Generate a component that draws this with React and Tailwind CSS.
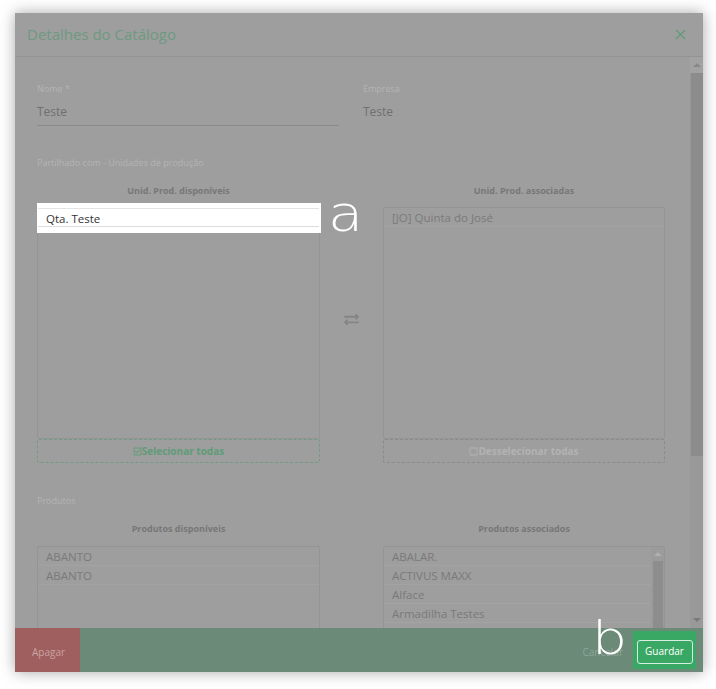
import { FaExchangeAlt, FaRegCheckSquare, FaRegSquare } from 'react-icons/fa';
import { X } from 'lucide-react';

const Row = ({ children, className = '' }) => (
  <div className={`h-[19px] px-[8px] border-b border-[#a3a3a3] text-[11.5px] leading-[19px] text-[#7a7a7a] ${className}`}>
    {children}
  </div>
);

function Field({ label, value, underline }) {
  return (
    <div>
      <div className="text-[9px] leading-[10px] text-[#b4b4b4]">{label}</div>
      <div className={`mt-[11px] pb-[6px] text-[12px] leading-[14px] text-[#6f6f6f] ${underline ? 'border-b border-[#8a8a8a]' : ''}`}>
        {value}
      </div>
    </div>
  );
}

export default function App() {
  return (
    <div className="relative w-[716px] h-[689px] bg-white overflow-hidden font-['Open_Sans','Liberation_Sans',sans-serif]">
      <div className="ml-[15px] mt-[13px] w-[688px] h-[659px] flex flex-col bg-[#9e9e9e] shadow-[0_0_14px_rgba(0,0,0,0.35)]">
        {/* Header */}
        <div className="h-[44px] flex-shrink-0 flex items-center justify-between pl-[12px] pr-[14px] border-b border-[#949494]">
          <div className="text-[15px] text-[#6d9a81]">Detalhes do Catálogo</div>
          <X size={17} strokeWidth={1.6} className="text-[#5f9b79]" />
        </div>

        {/* Body */}
        <div className="flex-1 flex min-h-0">
          <div className="flex-1 overflow-hidden pl-[22px] pr-[25px] pt-[27px]">
            <div className="grid grid-cols-2 gap-x-[24px]">
              <Field label="Nome *" value="Teste" underline />
              <Field label="Empresa" value="Teste" />
            </div>

            <div className="mt-[32px] text-[9px] leading-[10px] text-[#b4b4b4]">Partilhado com - Unidades de produção</div>

            <div className="mt-[18px] flex">
              <div className="w-[283px]">
                <div className="text-center text-[9px] leading-[10px] font-bold text-[#777]">Unid. Prod. disponíveis</div>
                <div className="relative mt-[11px] h-[232px] border border-[#949494] rounded-[2px]">
                  <div className="absolute -top-[5px] -left-[1px] -right-[2px] h-[30px] bg-white" />
                  <div className="relative h-[19px] px-[8px] border-b border-[#dcdcdc] border-t border-t-[#e4e4e4] text-[11.5px] leading-[19px] text-[#333]">Qta. Teste</div>
                </div>
                <div className="h-[24px] border border-dashed border-[#6f9c82] rounded-[2px] flex items-center justify-center text-[10px] font-bold text-[#5f9c78]">
                  <FaRegCheckSquare size={9} />
                  Selecionar todas
                </div>
              </div>

              <div className="w-[63px] flex items-center justify-center">
                <FaExchangeAlt size={15} className="text-[#858585] -mt-[10px]" />
              </div>

              <div className="w-[282px]">
                <div className="text-center text-[9px] leading-[10px] font-bold text-[#777]">Unid. Prod. associadas</div>
                <div className="mt-[11px] h-[232px] border border-[#949494] rounded-[2px]">
                  <Row>[JO] Quinta do José</Row>
                </div>
                <div className="h-[24px] border border-dashed border-[#8a8a8a] rounded-[2px] flex items-center justify-center text-[10px] font-bold text-[#b3b3b3]">
                  <FaRegSquare size={9} />
                  Desselecionar todas
                </div>
              </div>
            </div>

            <div className="mt-[33px] text-[9px] leading-[10px] text-[#b4b4b4]">Produtos</div>

            <div className="mt-[18px] flex">
              <div className="w-[283px]">
                <div className="text-center text-[9px] leading-[10px] font-bold text-[#777]">Produtos disponíveis</div>
                <div className="mt-[12px] h-[120px] border border-[#949494] rounded-[2px]">
                  <Row>ABANTO</Row>
                  <Row>ABANTO</Row>
                </div>
              </div>
              <div className="w-[63px]" />
              <div className="w-[282px]">
                <div className="text-center text-[9px] leading-[10px] font-bold text-[#777]">Produtos associados</div>
                <div className="mt-[12px] h-[120px] border border-[#949494] rounded-[2px] flex">
                  <div className="flex-1">
                    <Row>ABALAR.</Row>
                    <Row>ACTIVUS MAXX</Row>
                    <Row>Alface</Row>
                    <Row>Armadilha Testes</Row>
                  </div>
                  <div className="w-[13px] flex flex-col items-center bg-[#9b9b9b]">
                    <div className="h-[14px] flex items-center">
                      <div className="w-0 h-0 border-x-[4px] border-x-transparent border-b-[4px] border-b-[#b0b0b0]" />
                    </div>
                    <div className="w-[10px] flex-1 bg-[#8d8d8d]" />
                  </div>
                </div>
              </div>
            </div>
          </div>

          {/* Scrollbar */}
          <div className="w-[13px] flex-shrink-0 flex flex-col items-center bg-[#999999]">
            <div className="h-[16px] w-full flex items-center justify-center bg-[#a2a2a2]">
              <div className="w-0 h-0 border-x-[4px] border-x-transparent border-b-[4px] border-b-[#888]" />
            </div>
            <div className="w-[12px] h-[383px] bg-[#8c8c8c]" />
            <div className="flex-1" />
            <div className="h-[16px] flex items-center justify-center">
              <div className="w-0 h-0 border-x-[4px] border-x-transparent border-t-[4px] border-t-[#7a7a7a]" />
            </div>
          </div>
        </div>

        {/* Footer */}
        <div className="h-[44px] flex-shrink-0 flex items-stretch bg-[#6b8a77]">
          <div className="w-[65px] bg-[#a05f5f] flex items-center pt-[4px] pl-[17px] text-[10px] text-[#c9a3a3]">Apagar</div>
          <div className="flex-1" />
          <div className="flex items-center pt-[4px] pr-[10px] text-[10px] text-[#8fa798]">Cancelar</div>
          <div className="my-[3px] mr-[7px] w-[63px] bg-[#39a864] flex items-center justify-center pt-[3px]">
            <div className="w-[56px] h-[24px] border border-white/80 rounded-[3px] flex items-center justify-center text-[10px] text-white">Guardar</div>
          </div>
        </div>
      </div>

      {/* Annotations */}
      <div className="absolute left-[328px] top-[189px] origin-left scale-x-[1.15] text-[50px] leading-none font-extralight text-white font-['DejaVu_Sans',sans-serif]">a</div>
      <div className="absolute left-[592px] top-[615px] origin-left scale-x-[1.2] text-[46px] leading-none font-extralight text-white font-['DejaVu_Sans',sans-serif]">b</div>
    </div>
  );
}
